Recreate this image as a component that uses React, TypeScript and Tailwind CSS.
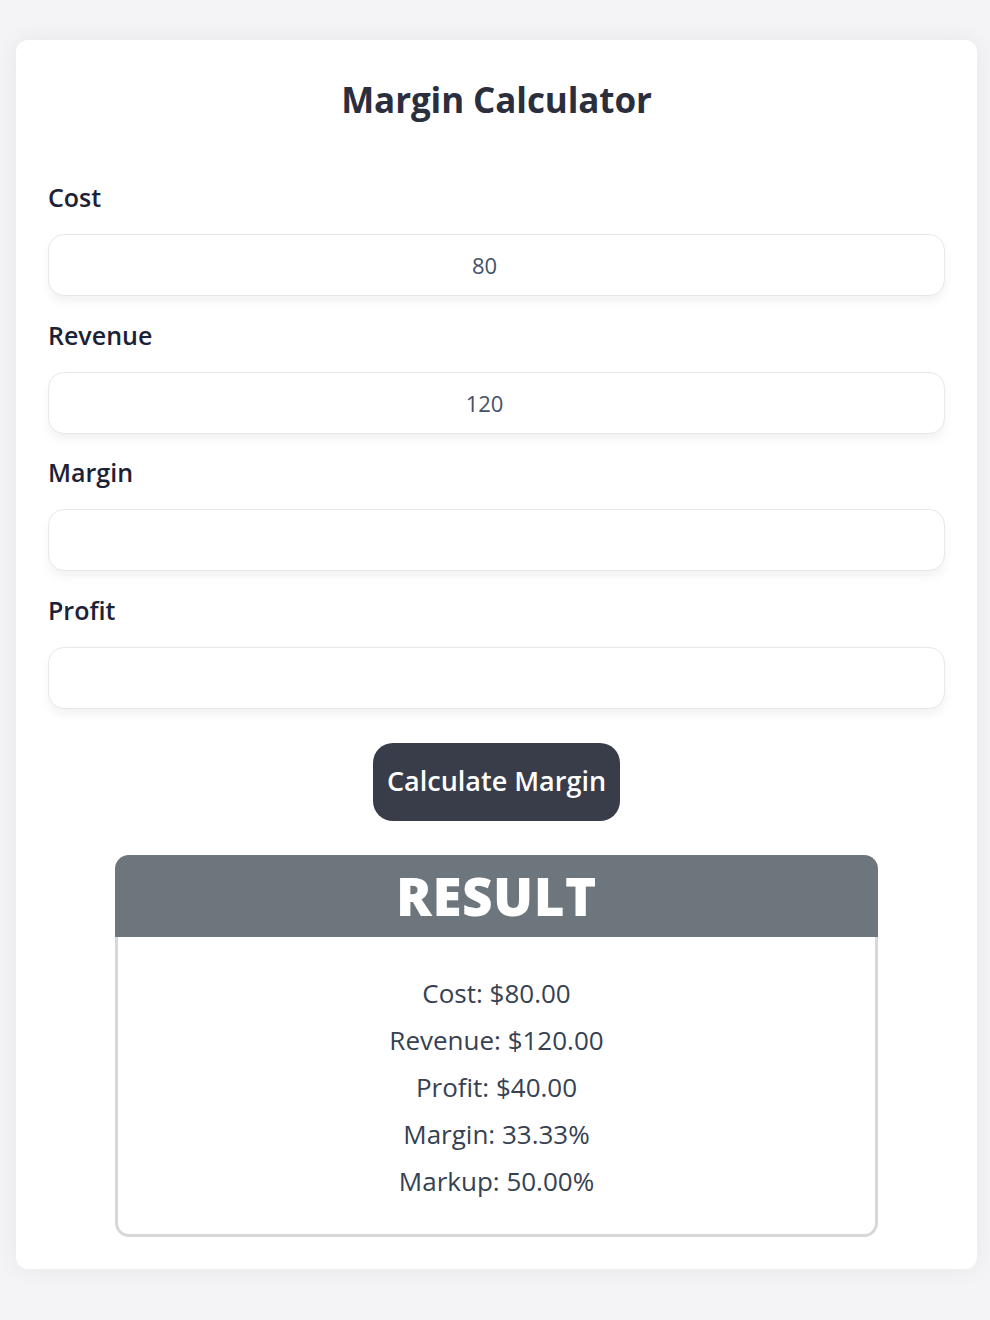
import { useState } from 'react';

const fields = [
    { key: 'cost', label: 'Cost' },
    { key: 'revenue', label: 'Revenue' },
    { key: 'margin', label: 'Margin' },
    { key: 'profit', label: 'Profit' },
] as const;

export default function App() {
    const [values, setValues] = useState<Record<string, string>>({ cost: '80', revenue: '120', margin: '', profit: '' });

    const lines = ['Cost: $80.00', 'Revenue: $120.00', 'Profit: $40.00', 'Margin: 33.33%', 'Markup: 50.00%'];

    return (
        <div className="min-h-screen bg-[#f4f4f6] pt-10 pb-12" style={{ fontFamily: '"Open Sans", "Noto Sans", sans-serif' }}>
            <div className="ml-4 w-[961px] bg-white rounded-xl shadow-[0_0_24px_rgba(0,0,0,0.06)] px-8 pt-9 pb-[32px]">
                <h1 className="text-center text-[35px] leading-[48px] font-bold text-[#2a2e3d] tracking-[-0.1px]">Margin Calculator</h1>

                <div className="mt-[57px]">
                    {fields.map((f) => (
                        <div key={f.key} className="mb-[22.5px]">
                            <label className="block text-[25px] leading-8 font-semibold text-[#1c2236] mb-[21px]">{f.label}</label>
                            <input
                                type="text"
                                value={values[f.key]}
                                onChange={(e) => setValues({ ...values, [f.key]: e.target.value })}
                                className="w-full h-[62px] rounded-2xl border border-[#e6e8eb] bg-white text-center pr-6 text-[22px] text-[#44516a] shadow-[0_6px_10px_rgba(0,0,0,0.05)] outline-none"
                            />
                        </div>
                    ))}
                </div>

                <div className="flex justify-center mt-[34px]">
                    <button className="w-[247px] h-[78px] rounded-[20px] bg-[#393c49] text-white text-[27px] font-semibold">
                        Calculate Margin
                    </button>
                </div>

                <div className="mx-auto w-[85%] mt-[34px]">
                    <div className="h-[82px] bg-[#6c767c] rounded-t-[14px] flex items-center justify-center">
                        <span className="text-white text-[53px] font-extrabold tracking-[0.5px]">RESULT</span>
                    </div>
                    <div className="border-[3px] border-t-0 border-[#d7d8da] rounded-b-[14px] pt-[33px] pb-[29px]">
                        {lines.map((l) => (
                            <div key={l} className="text-center text-[26px] leading-[47px] text-[#364152]">{l}</div>
                        ))}
                    </div>
                </div>
            </div>
        </div>
    );
}
